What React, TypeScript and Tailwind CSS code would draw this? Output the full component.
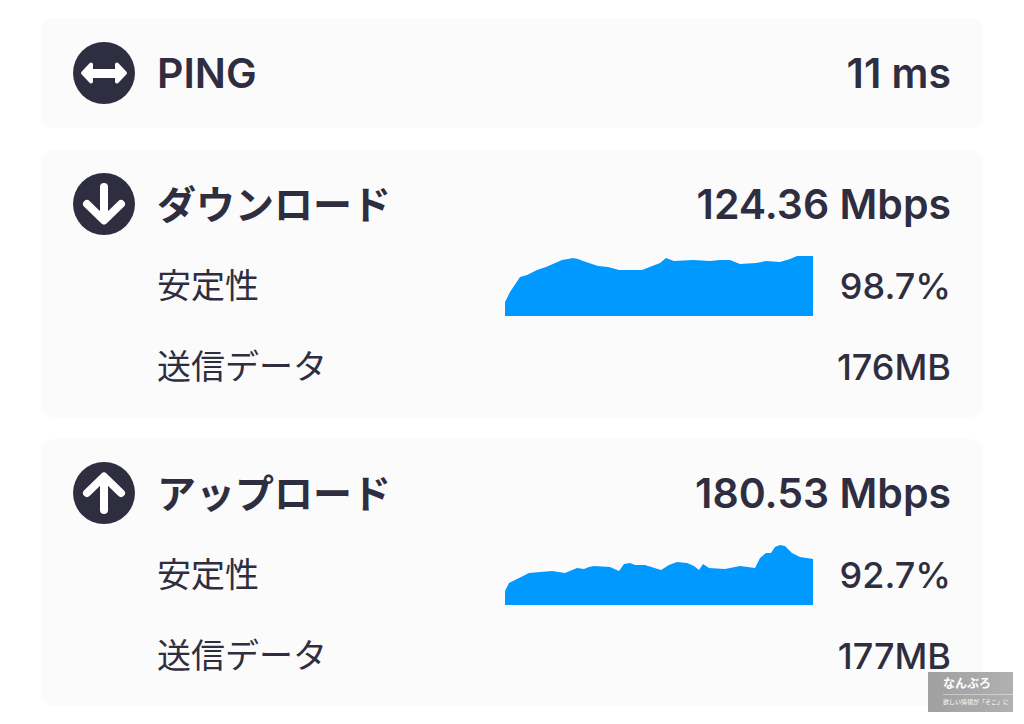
import type { ReactNode } from 'react';

type Transfer = {
  title: string;
  speed: string;
  stability: string;
  data: string;
  icon: ReactNode;
  chart: string;
};

const TRANSFERS: Transfer[] = [
  {
    title: 'ダウンロード',
    speed: '124.36 Mbps',
    stability: '98.7%',
    data: '176MB',
    icon: <path d="M31 14V47M14 31L31 47.500L48 31" strokeWidth="8" />,
    chart:
      '0,60 0,46 5,36 15,21 22,19 32,14 41,11 57,4 63,3 68,2 73,3 78,5 93,10 103,11 114,14 137,14 155,7 161,2 169,5 188,4 205,5 215,4 225,4 235,8 251,7 261,5 275,6 285,3 292,0 308,0 308,60',
  },
  {
    title: 'アップロード',
    speed: '180.53 Mbps',
    stability: '92.7%',
    data: '177MB',
    icon: <path d="M31 48V15M14 31L31 14.500L48 31" strokeWidth="8" />,
    chart:
      '0,60 0,46 4,38 14,33 24,28 47,26 60,28 72,23 79,24 84,22 89,21 105,22 114,26 119,19 125,18 130,20 140,20 156,25 164,20 172,17 182,18 189,21 194,25 198,19 204,23 220,24 235,21 250,23 255,13 261,8 266,8 270,2 275,0 280,1 287,8 295,12 308,14 308,60',
  },
];

function RoundIcon({ children }: { children: ReactNode }) {
  return (
    <svg
      viewBox="0 0 62 62"
      className="size-[62px] shrink-0"
      fill="none"
      stroke="#fff"
      strokeLinecap="round"
      strokeLinejoin="round"
      aria-hidden="true"
    >
      <circle cx="31" cy="31" r="31" fill="#2f2e41" stroke="none" />
      {children}
    </svg>
  );
}

function CardHeader({ icon, title, value }: { icon: ReactNode; title: ReactNode; value: string }) {
  return (
    <div className="flex h-[62px] items-center gap-[22px] text-[41px] font-semibold">
      <RoundIcon>{icon}</RoundIcon>
      <h2 className="flex-1 whitespace-nowrap">{title}</h2>
      <p className="whitespace-nowrap">{value}</p>
    </div>
  );
}

function TransferCard({ title, speed, stability, data, icon, chart }: Transfer) {
  return (
    <section className="flex flex-col gap-[21px] rounded-xl bg-[#fbfbfb] px-8 pt-[23px] pb-5">
      <CardHeader icon={icon} title={<span className="text-[39px]">{title}</span>} value={speed} />
      <div className="flex h-[60px] items-center pl-[84px]">
        <h3 className="flex-1 text-[34px]">安定性</h3>
        <svg viewBox="0 0 308 60" className="h-[60px] w-[308px] shrink-0" aria-hidden="true">
          <polygon points={chart} fill="#0099ff" />
        </svg>
        <p className="w-[138px] shrink-0 text-right text-[36px] font-medium">{stability}</p>
      </div>
      <div className="flex h-[60px] items-center justify-between pl-[84px]">
        <h3 className="text-[34px]">送信データ</h3>
        <p className="text-[36px] font-medium">{data}</p>
      </div>
    </section>
  );
}

export default function App() {
  return (
    <main
      lang="ja"
      className="relative flex flex-col gap-[22px] bg-white px-[41px] py-[18px] font-['Inter','Noto_Sans_CJK_JP',sans-serif] leading-none text-[#2f2e41]"
    >
      <section className="rounded-xl bg-[#fbfbfb] px-8 py-6">
        <CardHeader
          title="PING"
          value="11 ms"
          icon={
            <path
              d="M10 31L18 22.500V29H44V22.500L52 31L44 39.500V34H18V39.500Z"
              fill="#fff"
              strokeWidth="4"
            />
          }
        />
      </section>

      {TRANSFERS.map((transfer) => (
        <TransferCard key={transfer.title} {...transfer} />
      ))}

      {/* blog watermark */}
      <aside className="absolute right-[11px] bottom-[12px] h-10 w-[85px] bg-linear-to-r from-[#a0a0a0] to-[#b0b0b0] pt-[6px] pl-[15px] text-white">
        <p className="text-[12px] font-bold">なんぶろ</p>
        <p className="mt-[4px] border-t border-white/40 pt-[4px] text-[6px] whitespace-nowrap">
          欲しい情報が「そこ」に
        </p>
      </aside>
    </main>
  );
}
